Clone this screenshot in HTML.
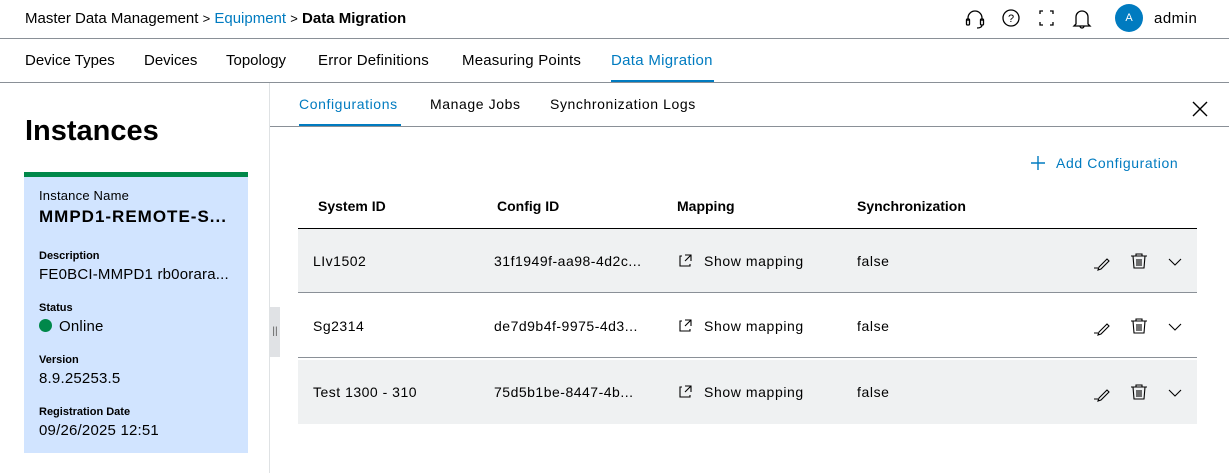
<!DOCTYPE html>
<html><head><meta charset="utf-8"><style>
*{margin:0;padding:0;box-sizing:border-box}
body{width:1229px;height:473px;overflow:hidden;background:#fff;font-family:"Liberation Sans",sans-serif;color:#000;position:relative;font-size:14px}
.a{position:absolute;white-space:nowrap}
.hl{position:absolute;height:1px;background:#8a9097}
.blue{color:#007bc0}
.b{font-weight:bold}
.ls{letter-spacing:0.6px}
.row{position:absolute;left:298px;width:899px;height:64px}
.row .a{top:24px;font-size:14px;letter-spacing:0.5px}
.card{letter-spacing:0.2px}
</style></head><body>
<div class="a" style="left:25px;top:10px;font-size:15px">Master Data Management <span style="font-size:13px">&gt;</span> <span class="blue">Equipment</span> <span style="font-size:13px">&gt;</span> <span class="b">Data Migration</span></div>
<svg class="a" style="left:963px;top:7px" width="240" height="24" viewBox="0 0 240 24" fill="none" stroke="#000" stroke-width="1.3">
<path d="M5 14v-3a7 7 0 0 1 14 0v3"/><rect x="3.5" y="12" width="3" height="6" rx="1"/><rect x="17.5" y="12" width="3" height="6" rx="1"/><path d="M19 18q0 3-5 3"/>
<circle cx="48" cy="11" r="8"/><text x="48" y="15" font-size="11" text-anchor="middle" fill="#000" stroke="none" font-family="Liberation Sans">?</text>
<path d="M77 7v-3h3M87 4h3v3M90 15v3h-3M80 18h-3v-3"/>
<path d="M113 17v-7a6 6 0 0 1 12 0v7l2 2h-16zM117 19a2 2 0 0 0 4 0"/>
</svg>
<div class="a" style="left:1115px;top:4px;width:28px;height:28px;border-radius:50%;background:#007bc0;color:#fff;font-size:11px;text-align:center;line-height:28px">A</div>
<div class="a" style="left:1154px;top:10px;font-size:15px;letter-spacing:0.5px">admin</div>
<div class="hl" style="left:0;top:38px;width:1229px"></div>
<div class="a" style="left:25px;top:52px;font-size:15px">Device Types</div>
<div class="a" style="left:144px;top:52px;font-size:15px">Devices</div>
<div class="a" style="left:226px;top:52px;font-size:15px">Topology</div>
<div class="a" style="left:318px;top:52px;font-size:15px;letter-spacing:0.2px">Error Definitions</div>
<div class="a" style="left:462px;top:52px;font-size:15px;letter-spacing:0.2px">Measuring Points</div>
<div class="a blue" style="left:611px;top:52px;font-size:15px;letter-spacing:0.3px">Data Migration</div>
<div class="a" style="left:611px;top:80px;width:103px;height:2px;background:#007bc0"></div>
<div class="hl" style="left:0;top:82px;width:1229px"></div>
<div class="a" style="left:269px;top:83px;width:1px;height:390px;background:#dfe2e4"></div>
<div class="a" style="left:270px;top:307px;width:10px;height:50px;background:#e0e2e5;font-size:10px;color:#555;line-height:50px;text-align:center">||</div>
<div class="a b" style="left:25px;top:115px;font-size:29px">Instances</div>
<div class="a" style="left:24px;top:172px;width:224px;height:281px;background:#d1e4ff;border-top:5px solid #00884a"></div>
<div class="a card" style="left:39px;top:188px;font-size:13px">Instance Name</div>
<div class="a b" style="left:39px;top:207px;font-size:17px;letter-spacing:1px">MMPD1-REMOTE-S...</div>
<div class="a b" style="left:39px;top:250px;font-size:11px">Description</div>
<div class="a card" style="left:39px;top:266px;font-size:15px">FE0BCI-MMPD1 rb0orara...</div>
<div class="a b" style="left:39px;top:302px;font-size:11px">Status</div>
<div class="a" style="left:39px;top:319px;width:13px;height:13px;border-radius:50%;background:#00884a"></div>
<div class="a card" style="left:59px;top:318px;font-size:15px">Online</div>
<div class="a b" style="left:39px;top:354px;font-size:11px">Version</div>
<div class="a card" style="left:39px;top:370px;font-size:15px">8.9.25253.5</div>
<div class="a b" style="left:39px;top:406px;font-size:11px">Registration Date</div>
<div class="a card" style="left:39px;top:422px;font-size:15px">09/26/2025 12:51</div>
<div class="a blue ls" style="left:299px;top:96px;font-size:14px">Configurations</div>
<div class="a" style="left:299px;top:124px;width:102px;height:2px;background:#007bc0"></div>
<div class="a ls" style="left:430px;top:96px;font-size:14px">Manage Jobs</div>
<div class="a ls" style="left:550px;top:96px;font-size:14px">Synchronization Logs</div>
<svg class="a" style="left:1192px;top:101px" width="16" height="16" stroke="#000" stroke-width="1.4"><path d="M1 1l14 14M15 1L1 15"/></svg>
<div class="hl" style="left:270px;top:126px;width:959px"></div>
<svg class="a" style="left:1030px;top:155px" width="16" height="16" stroke="#007bc0" stroke-width="1.4"><path d="M8 1v14M1 8h14"/></svg>
<div class="a blue ls" style="left:1056px;top:155px;font-size:14px">Add Configuration</div>
<div class="a b" style="left:318px;top:198px">System ID</div>
<div class="a b" style="left:497px;top:198px">Config ID</div>
<div class="a b" style="left:677px;top:198px">Mapping</div>
<div class="a b" style="left:857px;top:198px">Synchronization</div>
<div class="a" style="left:298px;top:228px;width:899px;height:1px;background:#000"></div>
<div class="row" style="top:229px;background:#eff1f2;border-bottom:1px solid #8a9097"><div class="a" style="left:15px">LIv1502</div><div class="a" style="left:196px">31f1949f-aa98-4d2c...</div></div>
<div class="row" style="top:294px;border-bottom:1px solid #8a9097"><div class="a" style="left:15px">Sg2314</div><div class="a" style="left:196px">de7d9b4f-9975-4d3...</div></div>
<div class="row" style="top:360px;background:#eff1f2"><div class="a" style="left:15px">Test 1300 - 310</div><div class="a" style="left:196px">75d5b1be-8447-4b...</div></div>
<div class="a ls" style="left:704px;top:253px;font-size:14px">Show mapping</div>
<div class="a ls" style="left:704px;top:318px;font-size:14px">Show mapping</div>
<div class="a ls" style="left:704px;top:384px;font-size:14px">Show mapping</div>
<div class="a ls" style="left:857px;top:253px">false</div>
<div class="a ls" style="left:857px;top:318px">false</div>
<div class="a ls" style="left:857px;top:384px">false</div>
<svg class="a" style="left:0;top:0" width="1229" height="473" fill="none" stroke="#000" stroke-width="1.1">
<defs><g id="ic">
<path d="M682 256h-2v10h10v-2M685 255h6v6M691 255l-6 6"/>
<path d="M1094 268h4M1099 267l8-8 2 2-8 8-3 1z"/>
<path d="M1131 256h16M1136 256v-2h6v2M1133 256l1 12h10l1-12M1137 259v7M1139 259v7M1141 259v7"/>
<path d="M1169 259l6 6 6-6"/>
</g></defs>
<use href="#ic"/><use href="#ic" y="65"/><use href="#ic" y="131"/>
</svg>
</body></html>
